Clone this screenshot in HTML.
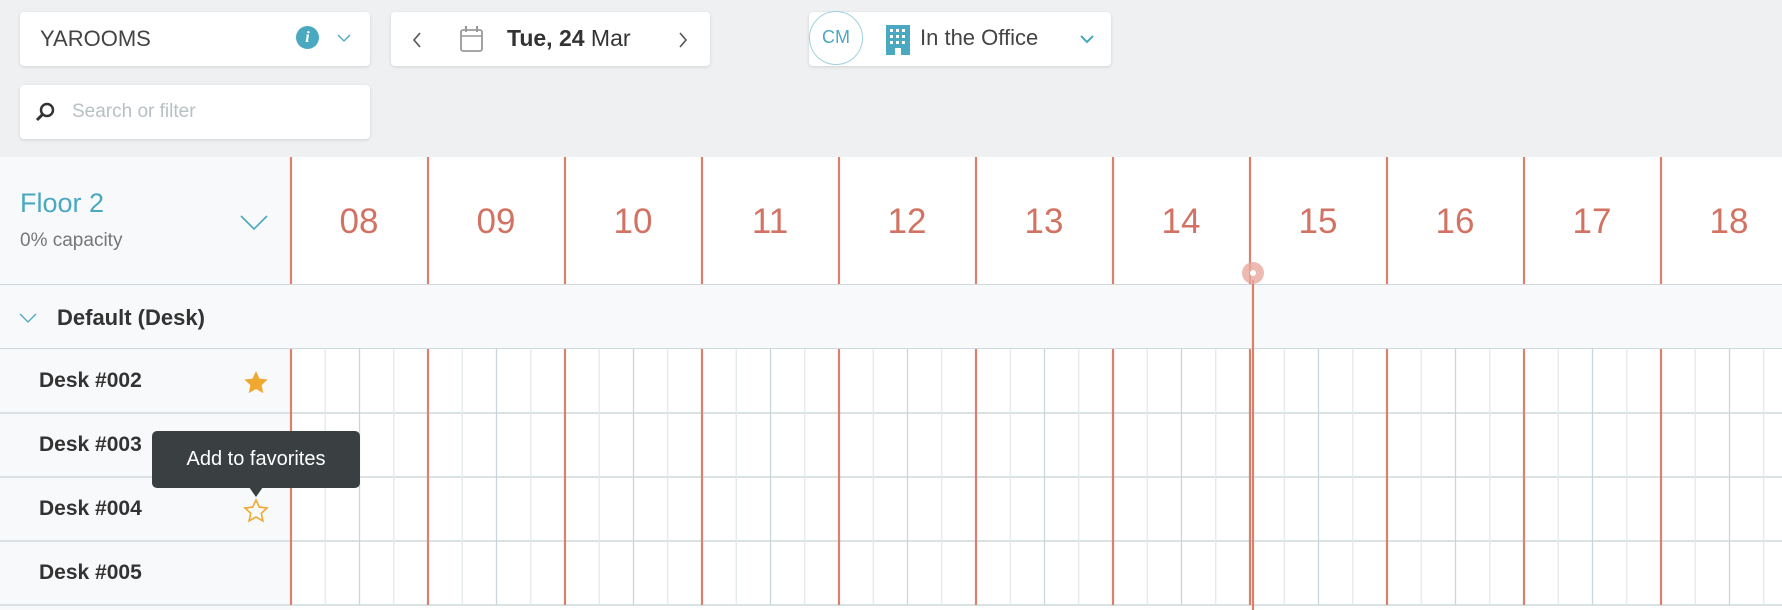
<!DOCTYPE html>
<html><head><meta charset="utf-8"><style>
*{box-sizing:border-box;margin:0;padding:0}
body{width:1782px;height:610px;overflow:hidden;background:#eef0f2;font-family:"Liberation Sans",sans-serif;position:relative;color:#333}
.box{position:absolute;background:#fff;border-radius:4px;box-shadow:0 1px 3px rgba(0,0,0,.12)}
.abs{position:absolute}
</style></head><body>
<div class="box" style="left:20px;top:12px;width:350px;height:54px">
  <div class="abs" style="left:20px;top:14px;font-size:22px;color:#444">YAROOMS</div>
  <div class="abs" style="left:276px;top:14px;width:23px;height:23px;border-radius:50%;background:#4aa8c0;color:#fff;font:bold italic 16px 'Liberation Serif',serif;text-align:center;line-height:23px">i</div>
  <svg class="abs" style="left:316px;top:20px" width="16" height="12"><path d="M2 3l6 6 6-6" fill="none" stroke="#4aa8c0" stroke-width="1.3"/></svg>
</div>
<div class="box" style="left:391px;top:12px;width:319px;height:54px">
  <svg class="abs" style="left:20px;top:19px" width="12" height="18"><path d="M9 2l-6 7 6 7" fill="none" stroke="#555" stroke-width="1.6"/></svg>
  <svg class="abs" style="left:68px;top:13px" width="26" height="28"><rect x="2" y="5" width="21" height="21" rx="2" fill="none" stroke="#999" stroke-width="1.8"/><line x1="2" y1="11" x2="23" y2="11" stroke="#999" stroke-width="1.5"/><line x1="7" y1="1" x2="7" y2="7" stroke="#999" stroke-width="2"/><line x1="18" y1="1" x2="18" y2="7" stroke="#999" stroke-width="2"/></svg>
  <div class="abs" style="left:116px;top:13px;font-size:23px;color:#333"><b style="font-weight:600">Tue, 24</b> Mar</div>
  <svg class="abs" style="left:286px;top:19px" width="12" height="18"><path d="M3 2l6 7-6 7" fill="none" stroke="#555" stroke-width="1.6"/></svg>
</div>
<div class="box" style="left:809px;top:12px;width:302px;height:54px">
  <svg class="abs" style="left:77px;top:13px" width="24" height="30"><rect x="0" y="0" width="24" height="30" fill="#4aa8c0"/><g fill="#fff"><rect x="4" y="4" width="3" height="3"/><rect x="10" y="4" width="3" height="3"/><rect x="16" y="4" width="3" height="3"/><rect x="4" y="10" width="3" height="3"/><rect x="10" y="10" width="3" height="3"/><rect x="16" y="10" width="3" height="3"/><rect x="4" y="16" width="3" height="3"/><rect x="10" y="16" width="3" height="3"/><rect x="16" y="16" width="3" height="3"/><rect x="9" y="23" width="6" height="7"/></g></svg>
  <div class="abs" style="left:111px;top:13px;font-size:22px;color:#444">In the Office</div>
  <svg class="abs" style="left:270px;top:21px" width="16" height="12"><path d="M2 3l6 6 6-6" fill="none" stroke="#4aa8c0" stroke-width="2"/></svg>
</div>
<div class="abs" style="left:809px;top:11px;width:54px;height:54px;border-radius:50%;background:#fff;border:1.5px solid #9fd0dc;color:#4aa8c0;font-size:18px;text-align:center;line-height:51px">CM</div>
<div class="box" style="left:20px;top:85px;width:350px;height:54px">
  <svg class="abs" style="left:14px;top:16px" width="22" height="22"><circle cx="13" cy="9" r="6" fill="none" stroke="#333" stroke-width="2.5"/><line x1="9" y1="13" x2="3" y2="19" stroke="#333" stroke-width="3"/></svg>
  <div class="abs" style="left:52px;top:16px;font-size:19px;color:#b8c0c4">Search or filter</div>
</div>

<div class="abs" style="left:0;top:157px;width:1782px;height:453px;background:#fff"></div>
<div class="abs" style="left:0;top:157px;width:291px;height:453px;background:#f8f9fa"></div>
<div class="abs" style="left:0;top:284px;width:1782px;height:65px;background:#f8f9fa;border-top:1.5px solid #cfd8dc;border-bottom:1.5px solid #cfd8dc"></div>
<div class="abs" style="left:20px;top:188px;font-size:27px;color:#4aa8c0">Floor 2</div>
<div class="abs" style="left:20px;top:230px;font-size:19px;color:#777">0% capacity</div>
<svg class="abs" style="left:238px;top:212px" width="32" height="20"><path d="M3 4l13 13 13-13" fill="none" stroke="#4aa8c0" stroke-width="1.6"/></svg>
<svg class="abs" style="left:18px;top:311px" width="20" height="14"><path d="M2 3l8 8 8-8" fill="none" stroke="#4aa8c0" stroke-width="1.3"/></svg>
<div class="abs" style="left:57px;top:305px;font-size:22px;font-weight:bold;color:#333">Default (Desk)</div>

<svg class="abs" style="left:0;top:0" width="1782" height="610">
<g stroke="#cfd8dc" stroke-width="1.5">
<line x1="0" y1="413" x2="1782" y2="413"/><line x1="0" y1="477" x2="1782" y2="477"/><line x1="0" y1="541" x2="1782" y2="541"/><line x1="0" y1="605" x2="1782" y2="605"/>
</g>
</svg>
<svg class="abs" style="left:0;top:0" width="1782" height="610" id="grid"></svg>

<div class="abs" style="left:39px;top:369px;font-size:21px;font-weight:bold">Desk #002</div>
<div class="abs" style="left:39px;top:433px;font-size:21px;font-weight:bold">Desk #003</div>
<div class="abs" style="left:39px;top:497px;font-size:21px;font-weight:bold">Desk #004</div>
<div class="abs" style="left:39px;top:561px;font-size:21px;font-weight:bold">Desk #005</div>
<svg class="abs" style="left:243px;top:370px" width="26" height="26"><path d="M13 1l3.5 7.6 8.2.9-6.1 5.6 1.7 8.1L13 19l-7.3 4.2 1.7-8.1-6.1-5.6 8.2-.9z" fill="#f0a830"/></svg>
<svg class="abs" style="left:243px;top:498px" width="26" height="26"><path d="M13 2l3.3 7.1 7.7.9-5.7 5.3 1.6 7.6L13 19l-6.9 3.9 1.6-7.6L2 10l7.7-.9z" fill="none" stroke="#f0a830" stroke-width="1.6"/></svg>
<div class="abs" style="left:152px;top:431px;width:208px;height:57px;background:#3a3f42;border-radius:5px;color:#fff;font-size:20px;text-align:center;line-height:57px">Add to favorites</div>
<div class="abs" style="left:249px;top:487px;width:0;height:0;border-left:7px solid transparent;border-right:7px solid transparent;border-top:10px solid #3a3f42"></div>

<script>
(function(){
var s='';
var hours=['08','09','10','11','12','13','14','15','16','17','18'];
for(var i=0;i<11;i++){
 var x=291+137*i;
 for(var q=1;q<4;q++){var qx=x+q*34.25;s+='<line x1="'+qx+'" y1="349" x2="'+qx+'" y2="605" stroke="'+(q==2?'#c9d6dc':'#e3e9ec')+'" stroke-width="1.3"/>';}
 s+='<line x1="'+x+'" y1="157" x2="'+x+'" y2="284" stroke="#d9806f" stroke-width="2.2"/>';
 s+='<line x1="'+x+'" y1="349" x2="'+x+'" y2="605" stroke="#d9806f" stroke-width="2.2"/>';
 s+='<text x="'+(x+68)+'" y="233" text-anchor="middle" font-family="Liberation Sans,sans-serif" font-size="35" fill="#d27262">'+hours[i]+'</text>';
}
s+='<line x1="1253" y1="280" x2="1253" y2="610" stroke="#d9806f" stroke-width="2.2"/>';
s+='<circle cx="1253" cy="273" r="11" fill="#e9a9a0" opacity="0.8"/><circle cx="1253" cy="273" r="3" fill="#fff"/>';
document.getElementById('grid').innerHTML=s;
})();
</script>
</body></html>
